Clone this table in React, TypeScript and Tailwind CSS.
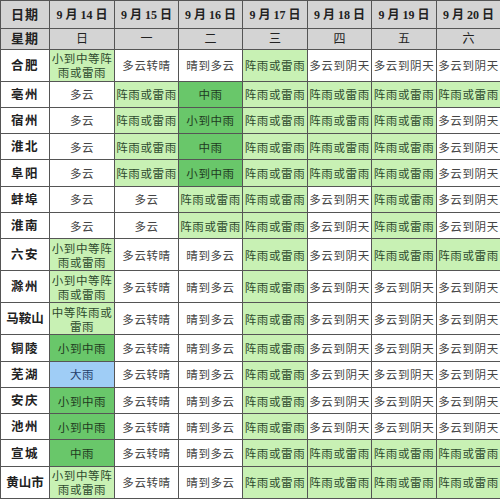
type Tone = "w" | "l" | "d" | "b";

const TONE_BG: Record<Tone, string> = {
  w: "bg-white text-[#444]",
  l: "bg-[#c8f1b4] text-[#2e4a2e]",
  d: "bg-[#69c76a] text-[#1f3a1f]",
  b: "bg-[#9fcdf6] text-[#24406a]",
};

const DAYS = [
  { date: "9 月 14 日", week: "日" },
  { date: "9 月 15 日", week: "一" },
  { date: "9 月 16 日", week: "二" },
  { date: "9 月 17 日", week: "三" },
  { date: "9 月 18 日", week: "四" },
  { date: "9 月 19 日", week: "五" },
  { date: "9 月 20 日", week: "六" },
];

const WIDTHS = ["w-[49px]", "w-[65px]", "w-[64px]", "w-[64px]", "w-[65px]", "w-[64px]", "w-[65px]", "w-[64px]"];

const ZY = "阵雨或雷雨";
const DY = "多云到阴天";
const ZQ = "多云转晴";
const QD = "晴到多云";
const XZD = "小到中等阵\n雨或雷雨";

type Row = { city: string; tall?: boolean; cells: [string, Tone][] };

const ROWS: Row[] = [
  { city: "合肥", tall: true, cells: [[XZD, "l"], [ZQ, "w"], [QD, "w"], [ZY, "l"], [DY, "w"], [DY, "w"], [DY, "w"]] },
  { city: "亳州", cells: [["多云", "w"], [ZY, "l"], ["中雨", "d"], [ZY, "l"], [ZY, "l"], [ZY, "l"], [ZY, "l"]] },
  { city: "宿州", cells: [["多云", "w"], [ZY, "l"], ["小到中雨", "d"], [ZY, "l"], [ZY, "l"], [ZY, "l"], [DY, "w"]] },
  { city: "淮北", cells: [["多云", "w"], [ZY, "l"], ["中雨", "d"], [ZY, "l"], [ZY, "l"], [ZY, "l"], [DY, "w"]] },
  { city: "阜阳", cells: [["多云", "w"], [ZY, "l"], ["小到中雨", "d"], [ZY, "l"], [ZY, "l"], [ZY, "l"], [DY, "w"]] },
  { city: "蚌埠", cells: [["多云", "w"], ["多云", "w"], [ZY, "l"], [ZY, "l"], [DY, "w"], [ZY, "l"], [DY, "w"]] },
  { city: "淮南", cells: [["多云", "w"], ["多云", "w"], [ZY, "l"], [ZY, "l"], [DY, "w"], [ZY, "l"], [DY, "w"]] },
  { city: "六安", tall: true, cells: [[XZD, "l"], [ZQ, "w"], [QD, "w"], [ZY, "l"], [DY, "w"], [ZY, "l"], [ZY, "l"]] },
  { city: "滁州", tall: true, cells: [[XZD, "l"], [ZQ, "w"], [QD, "w"], [ZY, "l"], [DY, "w"], [DY, "w"], [DY, "w"]] },
  { city: "马鞍山", tall: true, cells: [["中等阵雨或\n雷雨", "l"], [ZQ, "w"], [QD, "w"], [ZY, "l"], [DY, "w"], [DY, "w"], [DY, "w"]] },
  { city: "铜陵", cells: [["小到中雨", "d"], [ZQ, "w"], [QD, "w"], [ZY, "l"], [DY, "w"], [DY, "w"], [DY, "w"]] },
  { city: "芜湖", cells: [["大雨", "b"], [ZQ, "w"], [QD, "w"], [ZY, "l"], [DY, "w"], [DY, "w"], [DY, "w"]] },
  { city: "安庆", cells: [["小到中雨", "d"], [ZQ, "w"], [QD, "w"], [ZY, "l"], [DY, "w"], [DY, "w"], [DY, "w"]] },
  { city: "池州", cells: [["小到中雨", "d"], [ZQ, "w"], [QD, "w"], [ZY, "l"], [DY, "w"], [DY, "w"], [DY, "w"]] },
  { city: "宣城", cells: [["中雨", "d"], [ZQ, "w"], [QD, "w"], [ZY, "l"], [ZY, "l"], [ZY, "l"], [ZY, "l"]] },
  { city: "黄山市", tall: true, cells: [[XZD, "l"], [ZQ, "w"], [QD, "w"], [ZY, "l"], [ZY, "l"], [ZY, "l"], [ZY, "l"]] },
];

const cellBase = "border border-[#555] p-0 text-center align-middle";

export default function App() {
  return (
    <div className="w-[500px] h-[501px] bg-white font-['Noto_Sans_CJK_SC',sans-serif]">
      <table className="w-[500px] table-fixed border-collapse">
        <colgroup>
          {WIDTHS.map((w, i) => (
            <col key={i} className={w} />
          ))}
        </colgroup>
        <thead className="font-['Liberation_Serif','Noto_Sans_CJK_SC',serif] font-bold text-[#222]">
          <tr className="h-[28px] bg-[#d4d4d4]">
            <th className={`${cellBase} text-[13px] tracking-[1px]`}>日期</th>
            {DAYS.map((d) => (
              <th key={d.date} className={`${cellBase} text-[12px] whitespace-nowrap`}>
                {d.date}
              </th>
            ))}
          </tr>
          <tr className="h-[20px] bg-[#d4d4d4]">
            <th className={`${cellBase} text-[13px] tracking-[1px]`}>星期</th>
            {DAYS.map((d) => (
              <th key={d.date} className={`${cellBase} text-[12px] font-normal`}>
                {d.week}
              </th>
            ))}
          </tr>
        </thead>
        <tbody>
          {ROWS.map((r) => (
            <tr key={r.city} className={r.tall ? "h-[32px]" : "h-[26.3px]"}>
              <td
                className={`${cellBase} bg-white text-[12.5px] font-bold whitespace-nowrap text-[#222] ${
                  r.city.length > 2 ? "tracking-[0px]" : "tracking-[1.5px]"
                }`}
              >
                {r.city}
              </td>
              {r.cells.map(([text, tone], i) => (
                <td
                  key={i}
                  className={`${cellBase} ${TONE_BG[tone]} whitespace-pre-line text-[11.5px] leading-[14px] tracking-[0.6px]`}
                >
                  {text}
                </td>
              ))}
            </tr>
          ))}
        </tbody>
      </table>
    </div>
  );
}
